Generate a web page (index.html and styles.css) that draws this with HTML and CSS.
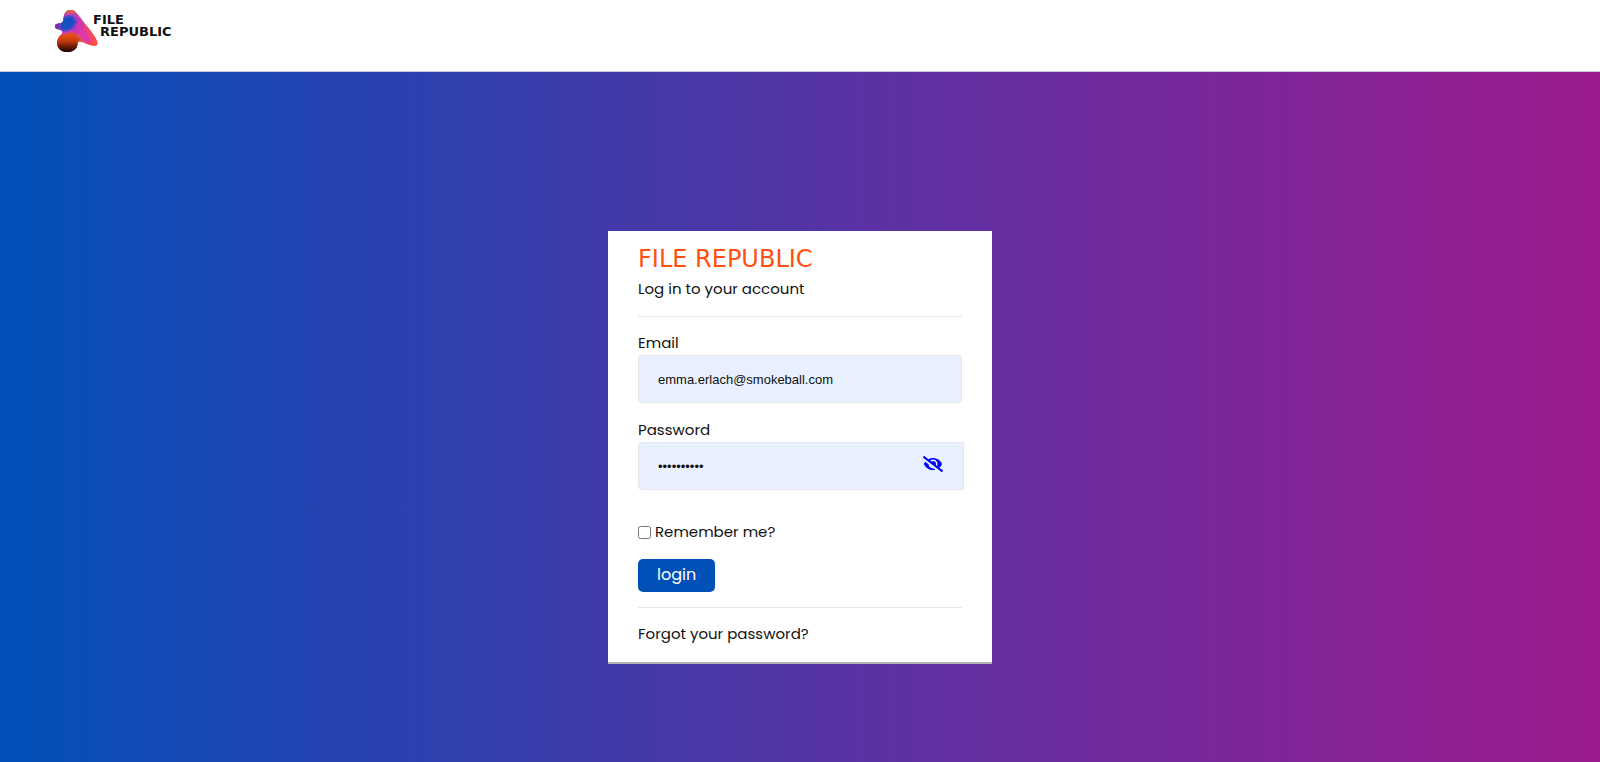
FILE: index.html
```html
<!DOCTYPE html>
<html lang="en">
<head>
    <meta charset="UTF-8">
    <meta name="viewport" content="width=device-width, initial-scale=1.0">
    <title>File Republic</title>
    <link rel="stylesheet" href="styles.css">
</head>
<body>

<header class="header">
    <a href="#" class="logo">
        <svg class="logo-mark" viewBox="0 0 150 150" aria-hidden="true">
            <defs>
                <linearGradient id="base" x1="0" y1="0" x2="1" y2="0.4">
                    <stop offset="0" stop-color="#c03cc0"/>
                    <stop offset="0.6" stop-color="#c633c4"/>
                    <stop offset="1" stop-color="#ff4a3c"/>
                </linearGradient>
                <linearGradient id="foot" x1="0" y1="0" x2="0" y2="1">
                    <stop offset="0" stop-color="#ff5a14"/>
                    <stop offset="0.4" stop-color="#c83c0a"/>
                    <stop offset="0.85" stop-color="#1c0500"/>
                </linearGradient>
                <filter id="soft" x="-50%" y="-50%" width="200%" height="200%">
                    <feGaussianBlur stdDeviation="4"/>
                </filter>
                <clipPath id="blob">
                    <path d="M46 22C52 12 66 12 76 20C88 31 96 46 108 60C124 80 143 104 143 117C141 126 122 122 108 116C96 110 86 106 83 113C84 130 70 141 52 141C34 141 21 130 21 113C21 101 28 93 36 86C40 80 34 76 24 73C12 71 12 58 21 56C30 54 36 55 39 48C41 38 40 30 46 22Z"/>
                </clipPath>
            </defs>
            <g clip-path="url(#blob)">
                <rect width="150" height="150" fill="url(#base)"/>
                <g filter="url(#soft)">
                    <path d="M34 10L84 6L104 50L78 24L46 26Z" fill="#e8643c"/>
                    <path d="M40 36L66 28L80 50L64 76L38 80L24 66Z" fill="#1450c0"/>
                    <path d="M8 50L24 50L32 62L22 82L8 76Z" fill="#7a2cae"/>
                    <path d="M98 44L150 96L150 136L128 110Z" fill="#ff4b4b"/>
                    <path d="M86 62L108 78L128 112L100 108Z" fill="#e236b4"/>
                    <path d="M84 88L106 126L82 124Z" fill="#ff7828"/>
                    <path d="M14 92L70 80L92 104L84 148L14 148Z" fill="url(#foot)"/>
                </g>
            </g>
        </svg>
        <span class="logo-text">
            <span class="logo-line">FILE</span>
            <span class="logo-line indent">REPUBLIC</span>
        </span>
    </a>
</header>

<main class="page">
    <div class="card">
        <h1 class="title">FILE REPUBLIC</h1>
        <p class="subtitle">Log in to your account</p>
        <hr>
        <form action="#" method="post">
            <div class="field">
                <label for="email">Email</label>
                <input type="email" id="email" name="email" value="emma.erlach@smokeball.com">
            </div>
            <div class="field">
                <label for="password">Password</label>
                <div class="password-box">
                    <input type="password" id="password" name="password" value="smokeball1">
                    <button type="button" class="toggle" aria-label="Show password">
                        <svg viewBox="0 0 640 512" aria-hidden="true">
                            <path fill="currentColor" d="M320 400c-75.85 0-137.25-58.71-142.9-133.11L72.2 185.82c-13.79 17.3-26.48 35.59-36.72 55.59a32.35 32.35 0 0 0 0 29.19C89.71 376.41 197.07 448 320 448c26.91 0 52.87-4 77.89-10.46L346 397.39a144.13 144.13 0 0 1-26 2.61zm313.82 58.1l-110.55-85.44a331.25 331.25 0 0 0 81.25-102.07 32.35 32.35 0 0 0 0-29.19C550.29 135.59 442.93 64 320 64a308.15 308.15 0 0 0-147.32 37.7L45.46 3.37A16 16 0 0 0 23 6.18L3.37 31.45A16 16 0 0 0 6.18 53.9l588.36 454.73a16 16 0 0 0 22.46-2.81l19.64-25.27a16 16 0 0 0-2.82-22.45zm-183.72-142l-39.3-30.38A94.75 94.75 0 0 0 416 256a94.76 94.76 0 0 0-121.31-92.21A47.65 47.65 0 0 1 304 192a46.64 46.64 0 0 1-1.54 10l-73.61-56.89A142.31 142.31 0 0 1 320 112a143.92 143.92 0 0 1 144 144c0 21.63-5.29 41.79-13.9 60.11z"/>
                        </svg>
                    </button>
                </div>
            </div>
            <div class="remember">
                <input type="checkbox" id="remember" name="remember">
                <label for="remember">Remember me?</label>
            </div>
            <button type="submit" class="login">login</button>
        </form>
        <hr>
        <a href="#" class="forgot">Forgot your password?</a>
    </div>
</main>

</body>
</html>
```
FILE: styles.css
```css
* {
    box-sizing: border-box;
}
body {
    display: flex;
    flex-direction: column;
    min-height: 100vh;
    margin: 0;
    font-family: Poppins, Inter, sans-serif;
    font-size: 15px;
    line-height: 24px;
    color: #111;
}
.header {
    display: flex;
    padding: 5px 50px 16px;
    background-color: #fff;
    border-bottom: 1px solid #c4cbe4;
}
.logo {
    display: flex;
    color: #111;
    text-decoration: none;
}
.logo-mark {
    width: 50px;
    height: 50px;
}
.logo-text {
    margin-left: -7px;
    padding-top: 9px;
    font-family: "DejaVu Sans", sans-serif;
    font-size: 13px;
    font-weight: bold;
    line-height: 12px;
}
.logo-line {
    display: block;
}
.indent {
    padding-left: 7px;
}
.page {
    flex: 1;
    padding: 159px 0 90px;
    background: linear-gradient(to right, #0250b8, #2a41b0 24%, #5a32a3 54%, #9c1b8f);
}
.card {
    width: 24%;
    min-width: 320px;
    margin: 0 auto;
    padding: 16px 30px;
    background-color: #fff;
    border-bottom: 2px solid #b4b4b4;
}
.title {
    margin: 0 0 6px;
    font-family: "DejaVu Sans", sans-serif;
    font-size: 24px;
    font-weight: 400;
    line-height: 24px;
    color: #ff5010;
}
.subtitle {
    margin: 0;
}
hr {
    margin: 15px 0 14px;
    border: 0;
    border-top: 1px solid #e8e8e8;
}
.field {
    margin-bottom: 15px;
}
.field label {
    display: block;
}
.field input {
    display: block;
    width: 100%;
    height: 48px;
    padding: 0 19px;
    border: 1px solid #e4e6ec;
    border-radius: 4px;
    background-color: #e8f0fe;
    color: #111;
    font-family: "Liberation Sans", Arial, sans-serif;
    font-size: 13px;
}
.password-box {
    position: relative;
    margin-right: -2px;
}
.password-box input {
    padding-right: 50px;
    border-radius: 4px 0 0 4px;
}
.toggle {
    position: absolute;
    top: 14px;
    right: 21px;
    display: flex;
    padding: 0;
    border: 0;
    background: none;
    color: #00f;
    cursor: pointer;
}
.toggle svg {
    width: 20px;
    height: 16px;
}
.remember {
    display: flex;
    align-items: center;
    gap: 4px;
    margin: 30px 0 15px;
}
.remember input {
    width: 13px;
    height: 13px;
    margin: 0;
}
.login {
    display: block;
    padding: 4px 19px 5px;
    border: 0;
    border-radius: 5px;
    background-color: #0050b8;
    color: #fff;
    font-family: inherit;
    font-size: 16px;
    line-height: 24px;
    cursor: pointer;
}
.login:hover {
    background-color: #0040a0;
}
.forgot {
    display: block;
    color: #111;
    text-decoration: none;
}
```
